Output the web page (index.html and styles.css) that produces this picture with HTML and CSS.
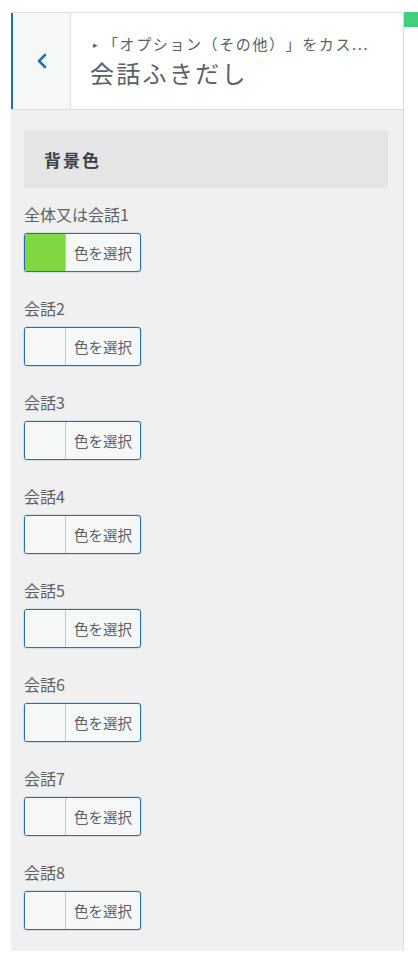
FILE: index.html
```html
<!DOCTYPE html>
<html lang="ja">
<head>
<meta charset="utf-8">
<link rel="stylesheet" href="styles.css">
</head>
<body>
<div class="frame">
  <div class="panel">
    <div class="header">
      <button class="back" aria-label="戻る">
        <svg width="12" height="16" viewBox="0 0 12 16"><path d="M9 2 L3 8 L9 14" fill="none" stroke="#2271b1" stroke-width="2.6" stroke-linecap="round" stroke-linejoin="round"/></svg>
      </button>
      <div class="titles">
        <div class="crumb"><span class="tri">▸</span>「オプション（その他）」をカス...</div>
        <div class="title">会話ふきだし</div>
      </div>
    </div>
    <div class="content">
      <div class="section-title">背景色</div>
      <div class="control">
        <div class="label">全体又は会話1</div>
        <div class="picker"><span class="swatch green"></span><span class="ptext">色を選択</span></div>
      </div>
      <div class="control">
        <div class="label">会話2</div>
        <div class="picker"><span class="swatch"></span><span class="ptext">色を選択</span></div>
      </div>
      <div class="control">
        <div class="label">会話3</div>
        <div class="picker"><span class="swatch"></span><span class="ptext">色を選択</span></div>
      </div>
      <div class="control">
        <div class="label">会話4</div>
        <div class="picker"><span class="swatch"></span><span class="ptext">色を選択</span></div>
      </div>
      <div class="control">
        <div class="label">会話5</div>
        <div class="picker"><span class="swatch"></span><span class="ptext">色を選択</span></div>
      </div>
      <div class="control">
        <div class="label">会話6</div>
        <div class="picker"><span class="swatch"></span><span class="ptext">色を選択</span></div>
      </div>
      <div class="control">
        <div class="label">会話7</div>
        <div class="picker"><span class="swatch"></span><span class="ptext">色を選択</span></div>
      </div>
      <div class="control">
        <div class="label">会話8</div>
        <div class="picker"><span class="swatch"></span><span class="ptext">色を選択</span></div>
      </div>
    </div>
  </div>
  <div class="accent"></div>
</div>
</body>
</html>
```
FILE: styles.css
```css
html, body {
  margin: 0;
  padding: 0;
  background: #ffffff;
}
body {
  font-family: "Noto Sans CJK JP", "Noto Sans", sans-serif;
  color: #5c6166;
  text-spacing-trim: space-all;
}
.frame {
  display: flex;
  align-items: flex-start;
  padding: 12px 0 0 11px;
}
.panel {
  width: 392px;
  border-top: 1px solid #e2e2e2;
  border-right: 1px solid #dcdcde;
  background: #f0f0f1;
}
.accent {
  width: 14px;
  height: 15px;
  background: #3fd07a;
}
.header {
  display: flex;
  height: 96px;
  background: #ffffff;
  border-bottom: 1px solid #dcdcde;
}
.back {
  width: 60px;
  border: none;
  border-left: 2px solid #2271b1;
  border-right: 1px solid #dcdcde;
  background: #f6f7f7;
  padding: 0;
  display: flex;
  align-items: center;
  justify-content: center;
  cursor: pointer;
}
.titles {
  padding: 20px 0 0 19px;
}
.crumb {
  font-size: 15px;
  line-height: 22px;
  color: #5c6166;
  letter-spacing: 1.6px;
  white-space: nowrap;
}
.tri {
  font-size: 9px;
  display: inline-block;
  width: 10px;
  margin-left: 3px;
  letter-spacing: 0;
  vertical-align: 2px;
}
.title {
  font-size: 24px;
  line-height: 32px;
  margin-top: 1px;
  letter-spacing: 2.3px;
  color: #5c6166;
}
.content {
  padding: 20px 15px 21px 13px;
}
.section-title {
  background: #e5e5e5;
  height: 58px;
  display: flex;
  align-items: center;
  padding-left: 20px;
  font-size: 17px;
  font-weight: 700;
  letter-spacing: 2px;
  color: #3c434a;
}
.control {
  margin-top: 16px;
}
.control + .control {
  margin-top: 26px;
}
.label {
  font-size: 16px;
  line-height: 20px;
  color: #5c6166;
}
.picker {
  margin-top: 9px;
  width: 115px;
  height: 37px;
  border: 1px solid #2271b1;
  border-radius: 3px;
  background: #f6f7f7;
  display: flex;
  overflow: hidden;
  box-shadow: 0 0 0 0.5px rgba(34,113,177,0.3);
}
.swatch {
  width: 40px;
  border-right: 1px solid #c3c4c7;
  background: #f6f7f7;
}
.swatch.green {
  background: #81d742;
}
.ptext {
  flex: 1;
  display: flex;
  align-items: center;
  justify-content: center;
  font-size: 14.5px;
  color: #5c6166;
}
```
